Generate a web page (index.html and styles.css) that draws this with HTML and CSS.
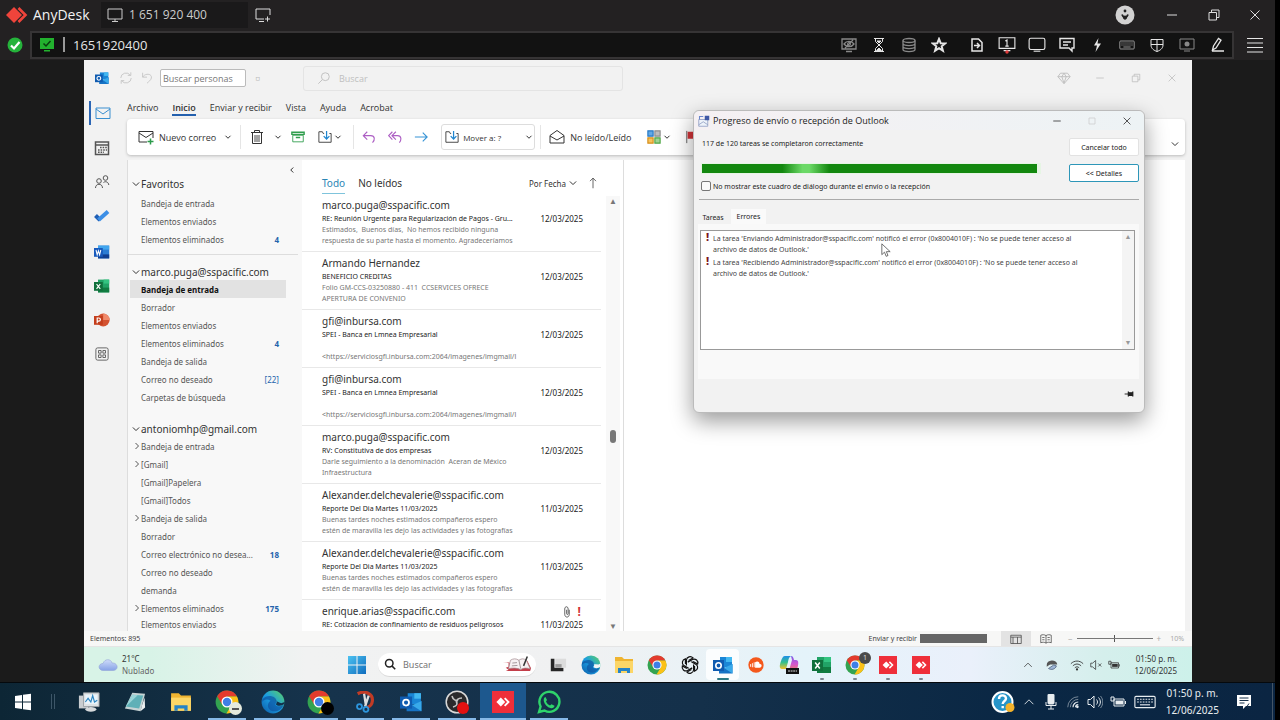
FILE: index.html
```html
<!DOCTYPE html>
<html lang="es">
<head>
<meta charset="utf-8">
<title>AnyDesk - 1 651 920 400</title>
<link rel="stylesheet" href="styles.css">
</head>
<body>
<svg class="sprite" aria-hidden="true">
  <defs>
    <linearGradient id="gEdge" x1="0" y1="1" x2="1" y2="0"><stop offset="0" stop-color="#0c59a4"/><stop offset=".5" stop-color="#1b9de2"/><stop offset="1" stop-color="#5fd35f"/></linearGradient>
    <linearGradient id="gCopA" x1="0" y1="0" x2="0" y2="1"><stop offset="0" stop-color="#1f8fe8"/><stop offset=".5" stop-color="#36c08c"/><stop offset="1" stop-color="#f3c22c"/></linearGradient>
    <linearGradient id="gCopB" x1="0" y1="0" x2="0" y2="1"><stop offset="0" stop-color="#7a5be8"/><stop offset=".5" stop-color="#d355cf"/><stop offset="1" stop-color="#f5824a"/></linearGradient>
    <linearGradient id="gWin" x1="0" y1="0" x2="1" y2="1"><stop offset="0" stop-color="#4cc2f1"/><stop offset="1" stop-color="#0f6cbd"/></linearGradient>
    <linearGradient id="gCloud" x1="0" y1="0" x2="0" y2="1"><stop offset="0" stop-color="#cfdcfa"/><stop offset="1" stop-color="#86a2e6"/></linearGradient>
  </defs>
  <symbol id="min" viewBox="0 0 16 16"><path d="M3 8h10"/></symbol>
  <symbol id="restore" viewBox="0 0 16 16"><path d="M3 5.500h7.500v7.500H3zM5.500 5.500V3H13v7.500h-2.500"/></symbol>
  <symbol id="max" viewBox="0 0 16 16"><path d="M4 4h8v8H4z"/></symbol>
  <symbol id="close" viewBox="0 0 16 16"><path d="M3.500 3.500l9 9M12.500 3.500l-9 9"/></symbol>
  <symbol id="down" viewBox="0 0 16 16"><path d="M3 5.500l5 5 5-5"/></symbol>
  <symbol id="right" viewBox="0 0 16 16"><path d="M5 2l6 6-6 6"/></symbol>
  <symbol id="left" viewBox="0 0 16 16"><path d="M10.500 3l-5 5 5 5"/></symbol>
  <symbol id="up" viewBox="0 0 16 16"><path d="M3 10.500l5-5 5 5"/></symbol>
  <symbol id="anydesk" viewBox="0 0 24 18"><path d="M9 1l8 8-8 8-8-8z" fill="#ef443b" stroke="none"/><path d="M13.500 2l7 7-7 7" fill="none" stroke="#ef443b" stroke-width="2.600"/></symbol>
  <symbol id="adtile" viewBox="0 0 20 20"><path d="M0 0h20v20H0z" fill="#ef2f3a" stroke="none"/><path d="M8 6l4 4-4 4-4-4z" fill="#fff" stroke="none"/><path d="M11.500 6.500L15 10l-3.500 3.500" fill="none" stroke="#fff" stroke-width="1.700"/></symbol>
  <symbol id="monitor" viewBox="0 0 16 16"><path d="M1 2h14v10H1zM5 14.500h6M8 12v2"/></symbol>
  <symbol id="monplus" viewBox="0 0 16 16"><path d="M9 12H1V2h14v6M4 14.500h5M12.500 9.500v5M10 12h5"/></symbol>
  <symbol id="eyeoff" viewBox="0 0 16 16"><path d="M1 2h14v10H1zM5 14.500h6M3 7c2.500-3.500 7.500-3.500 10 0-2.500 3.500-7.500 3.500-10 0zM4 11l8-8" stroke-width="1.300"/><circle cx="8" cy="7" r="1.500"/></symbol>
  <symbol id="hour" viewBox="0 0 16 16"><path d="M3 1.500h10M3 14.500h10M4.500 2v2.500L8 8l3.500-3.500V2M4.500 14v-2.500L8 8l3.500 3.500V14"/><path d="M6 4h4L8 6zM5.500 13.500L8 11l2.500 2.500z" fill="currentColor"/></symbol>
  <symbol id="db" viewBox="0 0 16 16"><g stroke-width="1.300"><ellipse cx="8" cy="3.500" rx="6" ry="2"/><path d="M2 3.500v9c0 2.700 12 2.700 12 0v-9M2 6.500c0 2.700 12 2.700 12 0M2 9.500c0 2.700 12 2.700 12 0"/></g></symbol>
  <symbol id="star" viewBox="0 0 16 16"><path d="M8 2l1.700 4.200 4.500.2-3.500 2.900 1.200 4.400L8 11.200l-3.900 2.500 1.200-4.400L1.800 6.400l4.500-.2z" stroke-width="2"/></symbol>
  <symbol id="filego" viewBox="0 0 16 16"><path d="M3 2h6.500L13 5.500V14H3zM5 8.500h5M8 6l2.500 2.500L8 11" stroke-width="1.500"/></symbol>
  <symbol id="mon1" viewBox="0 0 16 16"><path d="M1 1.500h14v9.500H1zM5 13h6M6.500 4.500L8 3.500V9M6.500 9h3"/><circle cx="8" cy="14.200" r="1.500" fill="#e23b3b" stroke="none"/></symbol>
  <symbol id="monitor2" viewBox="0 0 16 16"><rect x="1" y="2" width="14" height="10" rx="1.500"/><path d="M5 13.500h6"/></symbol>
  <symbol id="chat" viewBox="0 0 16 16"><path d="M1 1.500h14V11h-2v3l-3-3H1zM4 5h8M4 8h5" stroke-width="1.400"/></symbol>
  <symbol id="bolt" viewBox="0 0 16 16"><path d="M9.500 1L5 8.500h3L6.500 15 12 6.500H8.500z" fill="currentColor" stroke="none"/></symbol>
  <symbol id="kbd" viewBox="0 0 20 16"><rect x="1" y="3" width="18" height="10" rx="1"/><path d="M3 5.500h14M3 8h14" stroke-dasharray="1.500 1"/><path d="M5.500 10.500h9"/></symbol>
  <symbol id="shield" viewBox="0 0 16 16"><path d="M2 2.500h12V8c0 3.500-3 5.500-6 6.500C5 13.500 2 11.500 2 8zM8 2.500v12M2 7.500h12"/></symbol>
  <symbol id="rec" viewBox="0 0 16 16"><path d="M1 2h14v10H1zM5 14h6"/><circle cx="8" cy="7" r="2.500" fill="currentColor" stroke="none"/></symbol>
  <symbol id="pen" viewBox="0 0 16 16"><path d="M3.500 13l1-4L9.500 1.500l2.500 1.700L7 11zM3 14h12" stroke-width="1.300"/></symbol>
  <symbol id="burger" viewBox="0 0 16 16"><path d="M0 1.500h16M0 6h16M0 10.500h16M0 15h16"/></symbol>
  <symbol id="avatar" viewBox="0 0 20 20"><circle cx="10" cy="10" r="9.500" fill="#d2d2d2" stroke="none"/><circle cx="10" cy="6" r="1.400" fill="#222" stroke="none"/><path d="M7 9.500c.5 1.500 1.500 2.500 3 4 1.500-1.500 2.500-2.500 3-4" stroke="#222" stroke-width="1.800" fill="none"/><circle cx="10" cy="12.500" r="2" fill="#222" stroke="none"/></symbol>
  <symbol id="okdot" viewBox="0 0 16 16"><circle cx="8" cy="8" r="7.500" fill="#25b33b" stroke="none"/><path d="M4 8.500l3 3L12.500 5" stroke="#fff" stroke-width="2.200"/></symbol>
  <symbol id="okmon" viewBox="0 0 16 14"><path d="M1 0h14v11H1zM5 12h6v1.500H5z" fill="#22b12e" stroke="none"/><path d="M4.500 5.500l2.500 2.500L11.500 3" stroke="#093e0d" stroke-width="1.500"/></symbol>
  <symbol id="outlook" viewBox="0 0 20 20"><path d="M7 2h12v10H7z" fill="#1a86d6" stroke="none"/><path d="M13 2h6v5h-6z" fill="#42b8f1" stroke="none"/><path d="M6 9l7 4 6.500-4v9.500H6z" fill="#1673c5" stroke="none"/><path d="M19.500 9v9.500L11 13z" fill="#38a9ea" stroke="none"/><path d="M0 5h11v11H0z" fill="#0f5bb0" stroke="none"/><circle cx="5.500" cy="10.500" r="2.700" fill="none" stroke="#fff" stroke-width="1.600"/></symbol>
  <symbol id="word" viewBox="0 0 20 20"><path d="M5 2h14v16H5z" fill="#2b7cd3" stroke="none"/><path d="M5 2h14v5H5z" fill="#41a5ee" stroke="none"/><path d="M5 13h14v5H5z" fill="#103f91" stroke="none"/><path d="M0 5h11v11H0z" fill="#185abd" stroke="none"/><path d="M2.500 7.500L4 13.500l1.500-5 1.500 5 1.500-6" stroke="#fff" stroke-width="1.300"/></symbol>
  <symbol id="excel" viewBox="0 0 20 20"><path d="M5 2h14v16H5z" fill="#21a366" stroke="none"/><path d="M12 2h7v5h-7z" fill="#33c481" stroke="none"/><path d="M5 12h14v6H5z" fill="#107c41" stroke="none"/><path d="M0 5h11v11H0z" fill="#10703c" stroke="none"/><path d="M3.200 7.500l4.600 6M7.800 7.500l-4.600 6" stroke="#fff" stroke-width="1.500"/></symbol>
  <symbol id="ppt" viewBox="0 0 20 20"><circle cx="11.500" cy="10" r="8" fill="#d35230" stroke="none"/><path d="M11.500 2a8 8 0 0 1 8 8h-8z" fill="#f08a6b" stroke="none"/><path d="M0 5h11v11H0z" fill="#c43e1c" stroke="none"/><path d="M4 14V7.500h2a2 2 0 0 1 0 4H4" stroke="#fff" stroke-width="1.500"/></symbol>
  <symbol id="mail" viewBox="0 0 16 16"><path d="M1 3h14v10.500H1zM1 4l7 5 7-5"/></symbol>
  <symbol id="cal" viewBox="0 0 16 16"><path d="M1.500 2h13v12.500h-13zM1.500 5h13" stroke-width="1.500"/><path d="M6 7.500h7M4 10h9M4 12.300h6" stroke-width="1.400" stroke-dasharray="1.600 1"/></symbol>
  <symbol id="people" viewBox="0 0 16 16"><circle cx="5" cy="7" r="2.300"/><circle cx="11.500" cy="4" r="2.300"/><path d="M1.500 14c0-5 7-5 7 0M9.500 8.500c2-1.700 5-.5 5.300 2.500"/></symbol>
  <symbol id="todo" viewBox="0 0 16 16"><path d="M1.500 7.500l4.500 4.500" stroke="#1f5fb5" stroke-width="4"/><path d="M4.500 12L14 3.500" stroke="#3d8fe6" stroke-width="4"/></symbol>
  <symbol id="apps" viewBox="0 0 16 16"><rect x="1" y="1" width="14" height="14" rx="2"/><path d="M4 4h3v3H4zM9 4h3v3H9zM4 9h3v3H4zM9 9h3v3H9z"/></symbol>
  <symbol id="sync" viewBox="0 0 16 16"><path d="M2 8a6 6 0 0 1 11-3M14 8a6 6 0 0 1-11 3M13.500 1.500V5H10M2.500 14.500V11H6"/></symbol>
  <symbol id="undo" viewBox="0 0 16 16"><path d="M3 2v5h5M3 7c3-5 11-4 10 1-.5 2.500-3 4-5 6"/></symbol>
  <symbol id="search" viewBox="0 0 16 16"><circle cx="9.500" cy="6.500" r="4.500"/><path d="M6 10l-4.500 4.500"/></symbol>
  <symbol id="searchr" viewBox="0 0 16 16"><circle cx="7" cy="7" r="5"/><path d="M10.500 10.500l4.500 4.500"/></symbol>
  <symbol id="gem" viewBox="0 0 16 16"><path d="M4 2.500h8L15 6.500 8 14.500 1 6.500zM1 6.500h14M5.500 6.500L8 14l2.500-7.500L8 2.500z"/></symbol>
  <symbol id="newmail" viewBox="0 0 16 16"><path d="M9 13H1V2.500h14V9M1 4l7 4.500L15 4"/><path d="M12.500 9.500v6M9.500 12.500h6" stroke="#2c9b4b" stroke-width="1.500"/></symbol>
  <symbol id="trash" viewBox="0 0 16 16"><path d="M2 3.500h12M5.500 3.500v-2h5v2M3.500 3.500v11h9v-11"/><path d="M6 6v7M8 6v7M10 6v7" stroke-width=".9"/></symbol>
  <symbol id="archive" viewBox="0 0 16 16"><path d="M2 6h12v7.500H2z"/><path d="M1 2.500h14V5H1zM5.500 8.500h5" stroke-width="1.600"/></symbol>
  <symbol id="moveto" viewBox="0 0 16 16"><path d="M7 4H6L5 2H1v12h14V4h-2"/><path d="M9.800 1v9M6.500 7l3.300 3.300L13 7" stroke="#2186cf" stroke-width="1.400"/></symbol>
  <symbol id="reply" viewBox="0 0 16 16"><path d="M6 2L1.500 6.500 6 11M1.500 6.500H10c5 0 5 5 2 8" stroke-width="1.300"/></symbol>
  <symbol id="replyall" viewBox="0 0 16 16"><path d="M9 2L4.500 6.500 9 11M5 2L.8 6.500 5 11M4.500 6.500H11c4.500 0 4.500 5 2 8" stroke-width="1.300"/></symbol>
  <symbol id="forward" viewBox="0 0 16 16"><path d="M1 8h14M10 3l5 5-5 5" stroke-width="1.300"/></symbol>
  <symbol id="open" viewBox="0 0 16 16"><path d="M1 6.500L8 1.500l7 5V14H1zM1 7l7 4 7-4"/></symbol>
  <symbol id="cats" viewBox="0 0 16 16"><g stroke-width="1.300"><path d="M1 1h6v6H1z" fill="#62a9e6" stroke="#2577c4"/><path d="M9 1h6v6H9z" fill="#bdbdbd" stroke="#8b8b8b"/><path d="M1 9h6v6H1z" fill="#f6c35c" stroke="#d58d17"/><path d="M9 9h6v6H9z" fill="#9fd394" stroke="#4ea543"/></g></symbol>
  <symbol id="flag" viewBox="0 0 16 16"><path d="M2 1v14" stroke="#555"/><path d="M3 2h12v8H3z" fill="#d13438" stroke="none"/></symbol>
  <symbol id="clip" viewBox="0 0 16 16"><path d="M11 5v6c0 5-6 5-6 0V4c0-4 4.500-4 4.500 0v6c0 1.800-2 1.800-2 0V5"/></symbol>
  <symbol id="arrup" viewBox="0 0 16 16"><path d="M8 15V1.500M4 5.500l4-4 4 4"/></symbol>
  <symbol id="dlgicon" viewBox="0 0 16 16"><path d="M1 6h12v9H1z" fill="#eef2fa" stroke="#8896bd"/><path d="M1 13l6-4 6 4" stroke="#8896bd"/><path d="M9 1h6v6H9z" fill="#3f58a5" stroke="none"/><path d="M2 6V2h5" stroke="#6a86cc" stroke-width="1.400"/></symbol>
  <symbol id="pin" viewBox="0 0 16 16"><path d="M1 8h6" stroke-width="1.500"/><path d="M7 4v8M7 6h7v4H7zM14 4v8" fill="currentColor" stroke-width="2"/></symbol>
  <symbol id="cursor" viewBox="0 0 12 18"><path d="M1 1v13l3.200-3 2 5 2.200-1-2-4.600H11z" fill="#fff" stroke="#555"/></symbol>
  <symbol id="layout" viewBox="0 0 16 16"><path d="M1 3h14v11H1zM1 5.500h14M10 5.500V14M4 5.500V14"/></symbol>
  <symbol id="book" viewBox="0 0 16 16"><path d="M8 3.500C6 2 3 2 1 3v10c2-1 5-1 7 .5 2-1.500 5-1.500 7-.5V3c-2-1-5-1-7 .5zM8 3.500v10M3 6h3M3 9h3M10 6h3M10 9h3"/></symbol>
  <symbol id="cloud" viewBox="0 0 20 16"><path d="M5 13.500C-.5 13 0 6.500 5 6.500 6.500 1.500 13 1.500 14 6c6-.5 7 7 1.500 7.500z" fill="url(#gCloud)" stroke="#93a5d8" stroke-width=".6"/></symbol>
  <symbol id="win11" viewBox="0 0 20 20"><path d="M1 1h8.500v8.500H1zM10.500 1H19v8.500h-8.500zM1 10.500h8.500V19H1zM10.500 10.500H19V19h-8.500z" fill="url(#gWin)" stroke="none"/></symbol>
  <symbol id="win10" viewBox="0 0 20 20"><path d="M2 4l7-1v6.500H2zM10 2.800L18 1.700v7.800h-8zM2 10.500h7V17l-7-1zM10 10.500h8v7.800l-8-1.100z" fill="#fff" stroke="none"/></symbol>
  <symbol id="openbook" viewBox="0 0 32 18"><path d="M1 8l6-1v5l-3 1 3 2-3 1.500h26l1-3-4-8-3 1z" fill="#c33d49" stroke="none"/><path d="M9 5c3-2 6-2 9 0 3-2 5-2 8 0l4 9c-4-1-7-1-10 1-4-2-9-2-13-1z" fill="#f6f1f2" stroke="#a58e93" stroke-width=".8"/><path d="M18 5l2 9M11 8l5-.5M10.500 11l6-.5" stroke="#8a7c80" stroke-width=".8"/><path d="M27 1l-4 10" stroke="#333" stroke-width="1.600"/></symbol>
  <symbol id="task" viewBox="0 0 20 20"><path d="M2 3h4v10h10v4H2z" fill="#262626" stroke="none"/><path d="M7 3h12v10H7z" fill="#dcdcdc" stroke="none"/><path d="M7 9h7v4H7z" fill="#9b9b9b" stroke="none"/></symbol>
  <symbol id="edge" viewBox="0 0 20 20"><circle cx="10" cy="10" r="9.500" fill="url(#gEdge)" stroke="none"/><path d="M1 8C5 3 13 5 13 9.500c0 1-1 1.500-1 2.500 0 2 5 2 7 0-2 5-7 7-11 5C5 15 5 11 8 9 5 7 2 8 1 10z" fill="#0d4f9c" opacity=".65" stroke="none"/><path d="M12 9c2 0 1 2 .5 3 1 1.700 5 1.500 7-.5 0-1 .2-2 0-3l-2 1z" fill="#f3f5f6" stroke="none"/></symbol>
  <symbol id="edgedark" viewBox="0 0 20 20"><circle cx="10" cy="10" r="9.500" fill="url(#gEdge)" stroke="none"/><path d="M1 8C5 3 13 5 13 9.500c0 1-1 1.500-1 2.500 0 2 5 2 7 0-2 5-7 7-11 5C5 15 5 11 8 9 5 7 2 8 1 10z" fill="#0d4f9c" opacity=".65" stroke="none"/><path d="M12 9c2 0 1 2 .5 3 1 1.700 5 1.500 7-.5 0-.5 .3-1 .3-1.500l-3 1z" fill="#13304a" stroke="none"/></symbol>
  <symbol id="folder" viewBox="0 0 20 20"><path d="M1 2h7l2 2h9v14H1z" fill="#efb431" stroke="none"/><path d="M1 6h18v12H1z" fill="#fcd667" stroke="none"/><path d="M4 18v-5h12v5h-3v-2H7v2z" fill="#2683c6" stroke="none"/></symbol>
  <symbol id="chrome" viewBox="0 0 20 20"><circle cx="10" cy="10" r="9.500" fill="#33a350" stroke="none"/><path d="M1.800 5.200A9.500 9.500 0 0 1 18.400 5.500H10L6 12z" fill="#e33b2e" stroke="none"/><path d="M18.300 5.500A9.500 9.500 0 0 1 9.500 19.500L14 12l-3-6.500z" fill="#fbc116" stroke="none"/><circle cx="10" cy="10" r="4.600" fill="#fff" stroke="none"/><circle cx="10" cy="10" r="3.500" fill="#3f7fe6" stroke="none"/></symbol>
  <symbol id="gpt" viewBox="0 0 20 20"><g stroke="#111" stroke-width="1.200">
    <path d="M6.400 10.500V5A3.800 3.800 0 0 1 13 2.900L8.600 5.600"/>
    <path d="M6.400 10.500V5A3.800 3.800 0 0 1 13 2.900L8.600 5.600" transform="rotate(60 10 10)"/>
    <path d="M6.400 10.500V5A3.800 3.800 0 0 1 13 2.900L8.600 5.600" transform="rotate(120 10 10)"/>
    <path d="M6.400 10.500V5A3.800 3.800 0 0 1 13 2.900L8.600 5.600" transform="rotate(180 10 10)"/>
    <path d="M6.400 10.500V5A3.800 3.800 0 0 1 13 2.900L8.600 5.600" transform="rotate(240 10 10)"/>
    <path d="M6.400 10.500V5A3.800 3.800 0 0 1 13 2.900L8.600 5.600" transform="rotate(300 10 10)"/></g></symbol>
  <symbol id="sound" viewBox="0 0 20 20"><circle cx="10" cy="10" r="8.500" fill="#f4581c" stroke="none"/><path d="M4 12V9M6 12.500V8M8 12.500V7" stroke="#fff"/><path d="M9 13V7c3-2 5 0 5 2 3-.5 3 4 0 4z" fill="#fff" stroke="none"/></symbol>
  <symbol id="copilot" viewBox="0 0 20 20"><path d="M6 1h6c-2 1-2.500 3-3 6l-2 7H3c-3 0-2.500-4-1-8 1-3 2-5 4-5z" fill="url(#gCopA)" stroke="none"/><path d="M12 1c2 0 2.500 2 3 4h2c3 0 2.500 4 1.500 8-1 3-2 4-4 4H8c2-1 2.500-3 3-5l2-7z" fill="url(#gCopB)" stroke="none"/><path d="M7 13h13v6H7z" fill="#111" stroke="none"/><path d="M9 16h9" stroke="#ddd" stroke-dasharray="2 .6"/></symbol>
  <symbol id="whats" viewBox="0 0 24 24"><path d="M2 22l1.600-5.500A10 10 0 1 1 7.500 20.500z" stroke="#2fd46b" stroke-width="2.400" fill="none"/><path d="M8.500 7l1.500 3-1 1.500c1 2 2 3 4 4l1.500-1.200 3 1.500c0 2-2 2.700-3.500 2.400-4-1-6.500-4-7.200-7C6.500 9 7 7.500 8.500 7z" fill="#2fd46b" stroke="none"/></symbol>
  <symbol id="obs" viewBox="0 0 24 24"><circle cx="12" cy="12" r="10.800" fill="#2a2a2c" stroke="#d9d9d9" stroke-width="1.500"/><path d="M7 6c1 4 4 5 6 4M17 8c-4 0-6 2-5 5M8 17c4-1 5-3 3-6" stroke="#c4c4c4" stroke-width="1.600"/><circle cx="18" cy="18" r="6" fill="#e31111" stroke="none"/></symbol>
  <symbol id="snip" viewBox="0 0 24 24"><path d="M4 3c8-4 17 0 16 8-.5 5-3 6-6 7" stroke="#c23b25" stroke-width="3.500"/><path d="M11 3l2 13M16 5l-4 12" stroke="#dedede" stroke-width="2.500"/><circle cx="6" cy="17" r="2.700" stroke="#2d95dd" stroke-width="2"/><circle cx="13" cy="20" r="2.700" stroke="#2d95dd" stroke-width="2"/></symbol>
  <symbol id="perf" viewBox="0 0 24 24"><path d="M1 5h10v14H1z" fill="#c9cdd0" stroke="none"/><path d="M6 2h17v15H6z" fill="#dfe3e5" stroke="#9aa0a4"/><path d="M8 4h13v10H8z" fill="#eaf5fc" stroke="none"/><path d="M8 12l3-4 3 4 2-7 2 7 3-2" stroke="#2e86c1" stroke-width="1.300"/><ellipse cx="14" cy="20" rx="6" ry="2.500" fill="#d6d9db" stroke="none"/></symbol>
  <symbol id="note" viewBox="0 0 24 24"><path d="M9 2l14 1-5 19L1 19z" fill="#c6d3d4" stroke="none"/><path d="M9 4l12 1-4.500 14L2 17z" fill="#5fb0b7" stroke="none"/><path d="M9 4l6 .5L2 17z" fill="#9ad5d8" stroke="none"/><path d="M18 22l1.500-6 3-9 .5 11z" fill="#eceff0" stroke="none"/></symbol>
  <symbol id="help" viewBox="0 0 24 24"><circle cx="11.500" cy="12" r="10" fill="#2795c9" stroke="#fff" stroke-width="2"/><path d="M8 9c0-5 7-4.500 7-.5 0 2.500-3.300 2.500-3.300 5.500M11.700 16v2.200" stroke="#fff" stroke-width="2.400"/><circle cx="19" cy="17.500" r="4.500" fill="#f5b32b" stroke="none"/></symbol>
  <symbol id="mic" viewBox="0 0 16 16"><rect x="5" y="0" width="6" height="10" rx="1" fill="currentColor"/><path d="M3 8v3.500h10V8M8 11.500V15M5 15h6"/></symbol>
  <symbol id="signal" viewBox="0 0 16 16"><path d="M2 14A12 12 0 0 1 14 2M5 14a9 9 0 0 1 9-9" opacity=".55"/><path d="M8 14a6 6 0 0 1 6-6M11 14a3 3 0 0 1 3-3" stroke-width="1.400"/><circle cx="13" cy="13.500" r="1.500" fill="currentColor" stroke="none"/></symbol>
  <symbol id="wifi" viewBox="0 0 16 16"><path d="M1 6.500c4-4 10-4 14 0M3.300 9c3-2.800 6.400-2.800 9.400 0M5.500 11.200c1.700-1.500 3.300-1.500 5 0"/><circle cx="8" cy="13" r="1.300" fill="currentColor" stroke="none"/></symbol>
  <symbol id="vol" viewBox="0 0 16 16"><path d="M1 5.500h2.500L7 2v12l-3.500-3.500H1zM9.500 5.500c1.300 1.500 1.300 3.500 0 5M11.500 3.500c2.500 2.700 2.500 6.300 0 9"/><path d="M13.500 2c3 3.500 3 8.500 0 12" opacity=".5"/></symbol>
  <symbol id="mute" viewBox="0 0 16 16"><path d="M1 5.500h2.500L7.500 2v12l-4-3.500H1zM11 6l4 4M15 6l-4 4"/></symbol>
  <symbol id="batt" viewBox="0 0 16 16"><path d="M4 5h10v7H4zM15.500 7v3M1 3h3v4H1z"/><path d="M5.500 6.500H13v4H5.500z" fill="currentColor" stroke="none"/></symbol>
  <symbol id="notif" viewBox="0 0 16 16"><path d="M1 1h14v11h-5l-3 3v-3H1z" fill="#fff" stroke="none"/><path d="M3.500 4h9M3.500 6.500h9M3.500 9h5" stroke="#17314a"/><path d="M13 9.500l-2 3 3 2" stroke="#17314a"/></symbol>
  <symbol id="steam" viewBox="0 0 16 16"><path d="M2 8a6 5 0 0 1 12-.5H6C4 8 4 9 2 10z" fill="#555" stroke="none"/><path d="M4 12c3 2 8 1 9-3L10 8z" fill="#9fb7d8" stroke="#596b86"/></symbol>
</svg>

<header class="ad-title">
  <div class="brand"><svg class="logo"><use href="#anydesk"/></svg><span>AnyDesk</span></div>
  <button class="session"><svg class="i16"><use href="#monitor"/></svg><span>1 651 920 400</span></button>
  <button class="newtab" aria-label="Nueva sesión"><svg class="i16"><use href="#monplus"/></svg></button>
  <div class="ad-win">
    <button class="av" aria-label="Cuenta"><svg class="i20"><use href="#avatar"/></svg></button>
    <button aria-label="Minimizar"><svg class="i16"><use href="#min"/></svg></button>
    <button aria-label="Restaurar"><svg class="i16"><use href="#restore"/></svg></button>
    <button class="x" aria-label="Cerrar"><svg class="i16"><use href="#close"/></svg></button>
  </div>
</header>

<div class="ad-bar">
  <svg class="i16 status-ok"><use href="#okdot"/></svg>
  <div class="address">
    <svg class="i16"><use href="#okmon"/></svg><span class="bar"></span>
    <input aria-label="Dirección" value="1651920400">
    <div class="tools">
      <button class="dim" aria-label="Privacidad"><svg class="i16"><use href="#eyeoff"/></svg></button>
      <button aria-label="Espera"><svg class="i16"><use href="#hour"/></svg></button>
      <button class="dim" aria-label="Datos"><svg class="i16"><use href="#db"/></svg></button>
      <button aria-label="Favorito"><svg class="i16"><use href="#star"/></svg></button>
    </div>
    <div class="tools">
      <button aria-label="Archivos"><svg class="i16"><use href="#filego"/></svg></button>
      <button aria-label="Monitor 1"><svg class="i18"><use href="#mon1"/></svg></button>
      <button aria-label="Pantalla"><svg class="i18"><use href="#monitor2"/></svg></button>
      <button aria-label="Chat"><svg class="i16"><use href="#chat"/></svg></button>
      <button aria-label="Acciones"><svg class="i16"><use href="#bolt"/></svg></button>
      <button class="mid" aria-label="Teclado"><svg class="i16"><use href="#kbd"/></svg></button>
      <button aria-label="Permisos"><svg class="i16"><use href="#shield"/></svg></button>
      <button class="dim" aria-label="Grabar"><svg class="i16"><use href="#rec"/></svg></button>
      <button aria-label="Pizarra"><svg class="i16"><use href="#pen"/></svg></button>
    </div>
  </div>
  <button class="burger" aria-label="Menú"><svg class="i16"><use href="#burger"/></svg></button>
</div>

<main class="remote">
  <div class="ol-title">
    <svg class="i14"><use href="#outlook"/></svg>
    <svg class="i14 faint"><use href="#sync"/></svg>
    <svg class="i14 faint"><use href="#undo"/></svg>
    <input class="people" aria-label="Buscar personas" placeholder="Buscar personas">
    <span class="qat">▫</span>
    <label class="ol-search"><svg class="i14"><use href="#search"/></svg><input aria-label="Buscar" placeholder="Buscar"></label>
    <div class="ol-win">
      <button aria-label="Premium"><svg class="i14"><use href="#gem"/></svg></button>
      <button aria-label="Minimizar"><svg class="i12"><use href="#min"/></svg></button>
      <button aria-label="Restaurar"><svg class="i12"><use href="#restore"/></svg></button>
      <button aria-label="Cerrar"><svg class="i12"><use href="#close"/></svg></button>
    </div>
  </div>

  <div class="ol-body">
    <nav class="rail">
      <button class="on" aria-label="Correo"><svg class="i16"><use href="#mail"/></svg></button>
      <button aria-label="Calendario"><svg class="i16"><use href="#cal"/></svg></button>
      <button aria-label="Contactos"><svg class="i16"><use href="#people"/></svg></button>
      <button aria-label="Tareas"><svg class="i16"><use href="#todo"/></svg></button>
      <button class="office" aria-label="Word"><svg class="i16"><use href="#word"/></svg></button>
      <button aria-label="Excel"><svg class="i16"><use href="#excel"/></svg></button>
      <button aria-label="PowerPoint"><svg class="i16"><use href="#ppt"/></svg></button>
      <button aria-label="Aplicaciones"><svg class="i14"><use href="#apps"/></svg></button>
    </nav>
    <div class="work">
      <div class="tabs">
        <button>Archivo</button><button class="on">Inicio</button><button>Enviar y recibir</button><button>Vista</button><button>Ayuda</button><button>Acrobat</button>
      </div>
      <div class="ribbon">
        <button class="new"><svg class="i16"><use href="#newmail"/></svg>Nuevo correo<svg class="i8"><use href="#down"/></svg></button>
        <i class="sep"></i>
        <button aria-label="Eliminar"><svg class="i16"><use href="#trash"/></svg><svg class="i8 wide"><use href="#down"/></svg></button>
        <button class="green" aria-label="Archivar"><svg class="i14"><use href="#archive"/></svg></button>
        <button class="tight" aria-label="Mover"><svg class="i14"><use href="#moveto"/></svg><svg class="i8"><use href="#down"/></svg></button>
        <i class="sep"></i>
        <button class="purple" aria-label="Responder"><svg class="i14"><use href="#reply"/></svg></button>
        <button class="purple" aria-label="Responder a todos"><svg class="i14"><use href="#replyall"/></svg></button>
        <button class="blue" aria-label="Reenviar"><svg class="i14"><use href="#forward"/></svg></button>
        <button class="move"><svg class="i14"><use href="#moveto"/></svg><span>Mover a: ?</span><svg class="i8"><use href="#down"/></svg></button>
        <i class="sep"></i>
        <button class="read"><svg class="i16"><use href="#open"/></svg>No leído/Leído</button>
        <button class="tight" aria-label="Categorías"><svg class="i14"><use href="#cats"/></svg><svg class="i8"><use href="#down"/></svg></button>
        <button class="flag" aria-label="Seguimiento"><svg class="i14"><use href="#flag"/></svg></button>
        <button class="more" aria-label="Más"><svg class="i10"><use href="#down"/></svg></button>
      </div>
      <div class="panes">
        <aside class="folders">
          <button class="collapse" aria-label="Contraer"><svg class="i8"><use href="#left"/></svg></button>
          <h2><svg class="i10"><use href="#down"/></svg>Favoritos</h2>
          <ul>
            <li><a href="#">Bandeja de entrada</a></li>
            <li><a href="#">Elementos enviados</a></li>
            <li><a href="#">Elementos eliminados</a><b>4</b></li>
          </ul>
          <h2 class="first"><svg class="i10"><use href="#down"/></svg>marco.puga@sspacific.com</h2>
          <ul>
            <li class="sel"><a href="#">Bandeja de entrada</a></li>
            <li><a href="#">Borrador</a></li>
            <li><a href="#">Elementos enviados</a></li>
            <li><a href="#">Elementos eliminados</a><b>4</b></li>
            <li><a href="#">Bandeja de salida</a></li>
            <li><a href="#">Correo no deseado</a><b class="thin">[22]</b></li>
            <li><a href="#">Carpetas de búsqueda</a></li>
          </ul>
          <h2 class="second"><svg class="i10"><use href="#down"/></svg>antoniomhp@gmail.com</h2>
          <ul>
            <li class="sub"><svg class="i8"><use href="#right"/></svg><a href="#">Bandeja de entrada</a></li>
            <li class="sub"><svg class="i8"><use href="#right"/></svg><a href="#">[Gmail]</a></li>
            <li><a href="#">[Gmail]Papelera</a></li>
            <li><a href="#">[Gmail]Todos</a></li>
            <li class="sub"><svg class="i8"><use href="#right"/></svg><a href="#">Bandeja de salida</a></li>
            <li><a href="#">Borrador</a></li>
            <li><a href="#">Correo electrónico no desea...</a><b>18</b></li>
            <li><a href="#">Correo no deseado</a></li>
            <li><a href="#">demanda</a></li>
            <li class="sub"><svg class="i8"><use href="#right"/></svg><a href="#">Elementos eliminados</a><b>175</b></li>
            <li class="last"><a href="#">Elementos enviados</a></li>
          </ul>
        </aside>
        <section class="list">
          <div class="list-head">
            <button class="on">Todo</button><button>No leídos</button>
            <button class="sort">Por Fecha <svg class="i10"><use href="#down"/></svg></button>
            <button aria-label="Orden"><svg class="i12"><use href="#arrup"/></svg></button>
          </div>
          <div class="list-main">
            <div class="msgs">
              <article><h3>marco.puga@sspacific.com</h3><div class="subj"><span>RE: Reunión Urgente para Regularización de Pagos - Gru...</span><time>12/03/2025</time></div><p>Estimados,&nbsp; Buenos días,&nbsp; No hemos recibido ninguna<br>respuesta de su parte hasta el momento. Agradeceríamos</p></article>
              <article><h3>Armando Hernandez</h3><div class="subj"><span>BENEFICIO CREDITAS</span><time>12/03/2025</time></div><p>Folio GM-CCS-03250880 - 411&nbsp; CCSERVICES OFRECE<br>APERTURA DE CONVENIO</p></article>
              <article><h3>gfi@inbursa.com</h3><div class="subj"><span>SPEI - Banca en Lmnea Empresarial</span><time>12/03/2025</time></div><p><br>&lt;https://serviciosgfi.inbursa.com:2064/imagenes/imgmail/l</p></article>
              <article><h3>gfi@inbursa.com</h3><div class="subj"><span>SPEI - Banca en Lmnea Empresarial</span><time>12/03/2025</time></div><p><br>&lt;https://serviciosgfi.inbursa.com:2064/imagenes/imgmail/l</p></article>
              <article><h3>marco.puga@sspacific.com</h3><div class="subj"><span>RV: Constitutiva de dos empresas</span><time>12/03/2025</time></div><p>Darle seguimiento a la denominación&nbsp; Aceran de México<br>Infraestructura</p></article>
              <article><h3>Alexander.delchevalerie@sspacific.com</h3><div class="subj"><span>Reporte Del Dia Martes 11/03/2025</span><time>11/03/2025</time></div><p>Buenas tardes noches estimados compañeros espero<br>estén de maravilla les dejo las actividades y las fotografías</p></article>
              <article><h3>Alexander.delchevalerie@sspacific.com</h3><div class="subj"><span>Reporte Del Dia Martes 11/03/2025</span><time>11/03/2025</time></div><p>Buenas tardes noches estimados compañeros espero<br>estén de maravilla les dejo las actividades y las fotografías</p></article>
              <article><h3>enrique.arias@sspacific.com<span class="marks"><svg class="i12"><use href="#clip"/></svg><b>!</b></span></h3><div class="subj"><span>RE: Cotización de confinamiento de residuos peligrosos</span><time>11/03/2025</time></div><p></p></article>
            </div>
            <div class="scroll"><span>▲</span><i></i><span>▼</span></div>
          </div>
        </section>
        <section class="reading"></section>
      </div>
    </div>
  </div>

  <footer class="ol-status">
    <span>Elementos: 895</span>
    <span class="sendrec">Enviar y recibir<i></i></span>
    <button class="on" aria-label="Normal"><svg class="i12"><use href="#layout"/></svg></button>
    <button aria-label="Lectura"><svg class="i12"><use href="#book"/></svg></button>
    <span class="zoom">−<i></i>+<em>10%</em></span>
  </footer>

  <div class="tb11">
    <div class="weather"><svg><use href="#cloud"/></svg><p>21°C<br><span>Nublado</span></p></div>
    <div class="apps11">
      <button aria-label="Inicio"><svg class="i20"><use href="#win11"/></svg></button>
      <label class="search11"><svg class="i12"><use href="#searchr"/></svg><input aria-label="Buscar en Windows" placeholder="Buscar"><svg class="bk"><use href="#openbook"/></svg></label>
      <button aria-label="Vista de tareas"><svg class="i18"><use href="#task"/></svg></button>
      <button aria-label="Edge"><svg class="i20"><use href="#edge"/></svg></button>
      <button aria-label="Explorador"><svg class="i20"><use href="#folder"/></svg></button>
      <button aria-label="Chrome"><svg class="i20"><use href="#chrome"/></svg></button>
      <button aria-label="ChatGPT"><svg class="i20"><use href="#gpt"/></svg></button>
      <button class="on" aria-label="Outlook"><svg class="i20"><use href="#outlook"/></svg></button>
      <button aria-label="SoundCloud"><svg class="i18"><use href="#sound"/></svg></button>
      <button aria-label="Copilot"><svg class="i20"><use href="#copilot"/></svg></button>
      <button class="run" aria-label="Excel"><svg class="i20"><use href="#excel"/></svg></button>
      <button class="run" aria-label="Chrome perfil"><svg class="i20"><use href="#chrome"/></svg><span class="badge">1</span></button>
      <button class="run" aria-label="AnyDesk"><svg class="i18"><use href="#adtile"/></svg></button>
      <button class="run" aria-label="AnyDesk sesión"><svg class="i18"><use href="#adtile"/></svg></button>
    </div>
    <div class="tray11">
      <svg class="i12"><use href="#up"/></svg><svg class="i14"><use href="#steam"/></svg><svg class="i14"><use href="#wifi"/></svg><svg class="i12"><use href="#mute"/></svg><svg class="i12"><use href="#batt"/></svg>
      <time>01:50 p. m.<br>12/06/2025</time>
    </div>
  </div>

  <div class="dialog" role="dialog" aria-labelledby="dt">
    <div class="d-title">
      <svg class="i12"><use href="#dlgicon"/></svg><span id="dt">Progreso de envío o recepción de Outlook</span>
      <button aria-label="Minimizar"><svg class="i12"><use href="#min"/></svg></button>
      <button class="off" aria-label="Maximizar" disabled><svg class="i12"><use href="#max"/></svg></button>
      <button aria-label="Cerrar"><svg class="i12"><use href="#close"/></svg></button>
    </div>
    <div class="d-top">
      <div class="d-prog">
        <p>117 de 120 tareas se completaron correctamente</p>
        <div class="progress" role="progressbar" aria-valuenow="117" aria-valuemax="120"><i></i></div>
        <label><input type="checkbox">No mostrar este cuadro de diálogo durante el envío o la recepción</label>
      </div>
      <div class="d-btns"><button>Cancelar todo</button><button class="def">&lt;&lt; Detalles</button></div>
    </div>
    <div class="d-tabs"><button>Tareas</button><button class="on">Errores</button></div>
    <div class="d-panel">
      <div class="errors">
        <ul>
          <li>La tarea 'Enviando Administrador@sspacific.com' notificó el error (0x8004010F) : 'No se puede tener acceso al archivo de datos de Outlook.'</li>
          <li>La tarea 'Recibiendo Administrador@sspacific.com' notificó el error (0x8004010F) : 'No se puede tener acceso al archivo de datos de Outlook.'</li>
        </ul>
        <div class="d-scroll"><span>▲</span><span>▼</span></div>
      </div>
    </div>
    <div class="d-foot"><svg class="i10"><use href="#pin"/></svg></div>
    <svg class="cursor"><use href="#cursor"/></svg>
  </div>
</main>

<footer class="tb10">
  <button class="start" aria-label="Inicio"><svg class="i20"><use href="#win10"/></svg></button>
  <i class="grip"></i>
  <button aria-label="Monitor"><svg class="i22"><use href="#perf"/></svg></button>
  <button aria-label="Notas"><svg class="i22"><use href="#note"/></svg></button>
  <button aria-label="Explorador"><svg class="i22"><use href="#folder"/></svg></button>
  <button class="run" aria-label="Chrome"><svg class="i24"><use href="#chrome"/></svg><span class="dot white"></span></button>
  <button class="run" aria-label="Edge"><svg class="i24"><use href="#edgedark"/></svg></button>
  <button class="run" aria-label="Chrome 2"><svg class="i24"><use href="#chrome"/></svg><span class="dot"></span></button>
  <button class="run" aria-label="Recortes"><svg class="i22"><use href="#snip"/></svg></button>
  <button class="run" aria-label="Outlook"><svg class="i22"><use href="#outlook"/></svg></button>
  <button class="run" aria-label="OBS"><svg class="i24"><use href="#obs"/></svg></button>
  <button class="run active" aria-label="AnyDesk"><svg class="i22"><use href="#adtile"/></svg></button>
  <button class="run" aria-label="WhatsApp"><svg class="i24"><use href="#whats"/></svg></button>
  <div class="tray10">
    <svg class="i24"><use href="#help"/></svg><svg class="i14"><use href="#up"/></svg><svg class="i16"><use href="#mic"/></svg><svg class="i14"><use href="#signal"/></svg><svg class="i16"><use href="#vol"/></svg><svg class="i16"><use href="#batt"/></svg><svg class="k"><use href="#kbd"/></svg>
    <time>01:50 p. m.<br>12/06/2025</time>
    <svg class="i16 nt"><use href="#notif"/></svg>
    <i class="peek"></i>
  </div>
</footer>
</body>
</html>
```
FILE: styles.css
```css
* { box-sizing: border-box; }
body {
  margin: 0; height: 100vh; padding-right: 5px; overflow: hidden;
  display: flex; flex-direction: column;
  background: #000; color: #333;
  font-family: "Noto Sans", "Open Sans", sans-serif; font-size: 8px;
}
button, input { font: inherit; color: inherit; background: none; border: 0; padding: 0; margin: 0; min-width: 0; }
button { display: flex; align-items: center; justify-content: center; white-space: nowrap; }
p, h2, h3, ul { margin: 0; padding: 0; font-weight: 400; }
ul { list-style: none; }
a { color: inherit; text-decoration: none; }
svg { fill: none; stroke: currentColor; flex: none; display: block; }
.sprite { position: absolute; width: 0; height: 0; }
.i8 { width: 8px; height: 8px; stroke-width: 2; }
.i10 { width: 10px; height: 10px; stroke-width: 1.6; }
.i12 { width: 12px; height: 12px; }
.i14 { width: 14px; height: 14px; }
.i16 { width: 16px; height: 16px; }
.i18 { width: 18px; height: 18px; }
.i20 { width: 20px; height: 20px; }
.i22 { width: 22px; height: 22px; }
.i24 { width: 24px; height: 24px; }

/* AnyDesk frame */
.ad-title, .ad-bar, .ol-title, .tabs, .ribbon, .d-title { font-family: "Open Sans", "Noto Sans", sans-serif; }
.ad-title { flex: 0 0 29px; display: flex; align-items: center; background: #232122; color: #ddd; }
.brand { display: flex; align-items: center; gap: 4px; width: 101px; padding-left: 5px; font-size: 14px; font-weight: 500; color: #f2f2f2; }
.logo { width: 24px; height: 18px; }
.session { width: 147px; height: 26px; justify-content: flex-start; gap: 6px; padding-left: 6px; background: #1a191a; font-size: 12px; color: #ccc; }
.newtab { width: 30px; }
.ad-win { margin-left: auto; display: flex; }
.ad-win button { width: 42px; }
.ad-win .av { width: 52px; }
.ad-win .x { width: 40px; }
.ad-bar { flex: 0 0 31px; display: flex; align-items: center; background: #232122; color: #e6e6e6; }
.status-ok { margin: 0 7px; }
.address { flex: 1; height: 28px; display: flex; align-items: center; background: #121212; border: 2px solid #363435; padding-left: 7px; }
.address .bar { width: 2px; height: 15px; margin: 0 8px; background: #999; }
.address input { flex: 1; font-size: 13px; height: 22px; }
.tools { display: flex; }
.tools + .tools { margin-left: 8px; }
.tools button { width: 30px; height: 24px; }
.tools .dim { color: #888; }
.tools .mid { color: #b5b5b5; }
.burger { width: 41px; }

/* Remote desktop */
.remote { flex: 1; min-height: 0; position: relative; display: flex; flex-direction: column; margin: 0 83px 0 84px; background: #f2f2f2; box-shadow: 0 0 0 84px #1b1b1b; clip-path: inset(0 -83px 0 -84px); }
.ol-title { flex: 0 0 36px; display: flex; align-items: center; gap: 10px; padding: 0 2px 0 11px; color: #aaa; }
.faint { color: #c4c4c4; }
.faint + .faint { margin-left: -3px; }
.people { width: 86px; height: 18px; margin-left: -4px; padding: 0 2px; border: 1px solid #bbb; border-radius: 2px; background: #fff; font-size: 9px; }
.people::placeholder { color: #777; }
.qat { width: 40px; font-size: 14px; line-height: 14px; margin: 0 -2px 0 -1px; color: #bbb; }
.ol-search { width: 320px; height: 25px; display: flex; align-items: center; gap: 8px; padding-left: 13px; border: 1px solid #e4e4e4; border-radius: 3px; font-size: 9px; color: #bbb; }
.ol-search input::placeholder { color: #c0c0c0; }
.ol-win { margin-left: auto; display: flex; color: #bbb; }
.ol-win button { width: 36px; }
.ol-body { flex: 1; min-height: 0; display: flex; }
.rail { width: 42px; flex: none; color: #555; }
.rail button { width: 36px; height: 34px; border: 0 solid #2b66b5; }
.rail .on { height: 24px; margin: 5px 0 6px 5px; width: 28px; padding-right: 3px; border-left-width: 2px; color: #3a8fd0; }
.rail .office { margin-top: 2px; }
.work { flex: 1; min-width: 0; display: flex; flex-direction: column; }
.tabs { flex: 0 0 23px; display: flex; align-items: flex-start; gap: 14px; padding: 4px 0 0 1px; font-size: 9px; }
.tabs button { height: 16px; border-bottom: 2px solid transparent; }
.tabs .on { border-color: #2360ae; font-weight: 600; }
.ribbon { flex: 0 0 36px; display: flex; align-items: center; margin: 0 7px 0 1px; padding-left: 11px; background: #fff; border-radius: 4px; box-shadow: 0 1px 3px #bbb; font-size: 9px; }
.ribbon .sep { width: 1px; height: 24px; background: #e5e5e5; margin: 0 8px; }
.ribbon .new { gap: 5px; }
.ribbon .new .i8 { margin-left: 3px; }
.ribbon .wide { margin-left: 9px; }
.ribbon .green { color: #2f9e4d; margin: 0 13px 0 9px; }
.ribbon .tight + .sep { margin-left: 11px; }
.ribbon .purple { color: #ad5fc4; margin-right: 12px; }
.ribbon .blue { color: #3794d6; margin-right: 13px; }
.ribbon .move { width: 94px; height: 26px; justify-content: flex-start; gap: 4px; padding-left: 3px; border: 1px solid #ddd; border-radius: 3px; }
.ribbon .move span { flex: 1; text-align: left; font-size: 8px; }
.ribbon .move .i8 { margin-right: 1px; }
.ribbon .move + .sep { margin: 0 5px; }
.ribbon .tight { gap: 2px; }
.ribbon .read { gap: 5px; margin: 0 16px 0 3px; }
.ribbon .flag { margin-left: 14px; }
.ribbon .more { margin: 14px 5px 0 auto; }
.panes { flex: 1; min-height: 0; display: flex; margin: 5px 7px 0 1px; background: #fff; }
.folders { width: 175px; flex: none; overflow: hidden; background: #f8f8f8; border-left: 1px solid #ddd; position: relative; }
.collapse { position: absolute; top: 6px; right: 6px; }
.folders h2 { height: 18px; display: flex; align-items: center; font-size: 10px; margin: 15px 0 1px 3px; }
.folders h2.first { margin: 6px 4px 0 0; padding: 8px 0 0 3px; height: 26px; border-top: 1px solid #ddd; }
.folders h2.second { margin-top: 15px; margin-bottom: 0; height: 16px; }
.folders li { height: 18px; display: flex; align-items: center; margin: 0 16px 0 2px; padding: 0 7px 0 11px; color: #555; white-space: nowrap; }
.folders li.sub { padding-left: 3px; }
.folders li.sel { background: #e2e2e2; color: #111; font-weight: 700; }
.folders li.last { height: 15px; }
.folders li b { margin-left: auto; color: #2464ac; }
.folders li .thin { font-weight: 400; }
.list { width: 322px; flex: none; display: flex; flex-direction: column; border-right: 1px solid #ddd; }
.list-head { flex: 0 0 34px; display: flex; align-items: flex-end; gap: 13px; padding: 0 24px 0 20px; font-size: 10px; }
.list-head button { height: 22px; }
.list-head .on { color: #2b86b5; border-bottom: 1px solid #7fc4dc; }
.list-head .sort { margin-left: auto; margin-right: -4px; gap: 2px; font-size: 8px; }
.list-main { flex: 1; min-height: 0; display: flex; justify-content: space-between; }
.msgs { width: 299px; overflow: hidden; }
.msgs article { height: 58px; padding: 4px 18px 0 20px; border-bottom: 1px solid #e8e8e8; }
.msgs h3 { font-size: 10px; line-height: 15px; color: #333; display: flex; justify-content: space-between; }
.msgs .subj { display: flex; justify-content: space-between; font-size: 7px; line-height: 11px; color: #222; white-space: nowrap; }
.msgs time { font-size: 8px; }
.msgs p { font-size: 7px; line-height: 11px; color: #777; white-space: nowrap; }
.marks { display: flex; align-items: center; gap: 5px; margin-right: 2px; }
.marks b { color: #d13438; font-size: 12px; }
.scroll { width: 14px; margin: 2px 3px 0 0; background: #f8f8f8; display: flex; flex-direction: column; align-items: center; justify-content: space-between; color: #777; font-size: 8px; line-height: 10px; }
.scroll i { width: 6px; height: 13px; border-radius: 3px; background: #777; margin-top: 46px; }
.reading { flex: 1; background: #fff; }
.ol-status { flex: 0 0 16px; display: flex; align-items: center; padding: 0 8px 0 6px; background: #f7f7f6; border-bottom: 1px solid #e5e5e5; color: #444; font-size: 7px; }
.sendrec { margin-left: auto; margin-right: 14px; display: flex; align-items: center; gap: 3px; }
.sendrec i { width: 67px; height: 9px; background: #666; }
.ol-status button { width: 30px; height: 15px; }
.ol-status button.on { background: #e3e3e3; }
.zoom { display: flex; align-items: center; gap: 4px; margin-left: 7px; color: #aaa; font-size: 8px; }
.zoom i { width: 76px; height: 7px; background: linear-gradient(#777, #777) center / 100% 1px no-repeat, linear-gradient(#555, #555) center / 1px 100% no-repeat; }
.zoom em { font-style: normal; margin-left: 5px; font-size: 7px; }

/* Windows 11 taskbar of the remote machine */
.tb11 { flex: 0 0 35px; display: flex; align-items: center; background: linear-gradient(90deg, #d8f3e7 0, #d8f3e7 6%, #f1f2f2 20%, #f0f1f2 45%, #e4f3fa 65%, #eaf0fb 80%, #d5efec 92%, #cdf1ea); }
.weather { width: 256px; display: flex; align-items: center; gap: 4px; padding-left: 14px; line-height: 12px; }
.weather svg { width: 20px; height: 16px; }
.weather span { color: #666; }
.apps11 { display: flex; align-items: center; }
.apps11 button { width: 33px; height: 31px; position: relative; }
.search11 { width: 158px; height: 24px; margin: 0 5px; display: flex; align-items: center; gap: 7px; padding: 0 4px 0 6px; border-radius: 12px; background: #fff; border-bottom: 1px solid #d8d8d8; font-size: 9px; color: #222; }
.search11 input { flex: 1; }
.search11 .i12 { stroke-width: 2; }
.bk { width: 30px; height: 18px; }
.apps11 .on { background: #fbfdfe; border-radius: 4px; }
.apps11 .on::after, .apps11 .run::after { content: ""; position: absolute; bottom: 0; left: 15px; width: 4px; height: 2px; border-radius: 1px; background: #7c8791; }
.apps11 .on::after { left: 11px; width: 12px; background: #2b7a85; }
.badge { position: absolute; top: 3px; right: 0; width: 12px; height: 12px; line-height: 12px; border-radius: 6px; background: #4a4a4a; color: #ddd; font-size: 7px; }
.tray11 { margin-left: auto; display: flex; align-items: center; gap: 6px; padding-right: 15px; }
.tray11 .i12 + .i14 { margin: 0 5px; }
.tray11 time { margin-left: 8px; text-align: right; line-height: 12px; }

/* Send/receive dialog */
.dialog { position: absolute; top: 50px; right: 47px; width: 452px; background: #f2f2f2; border: 1px solid #bbb; border-radius: 6px; box-shadow: 0 8px 22px #0006; font-size: 7px; color: #222; }
.d-title { height: 19px; display: flex; align-items: center; gap: 3px; padding: 0 1px 0 4px; background: linear-gradient(90deg, #f5f0f3, #edf3f5); border-radius: 6px 6px 0 0; font-size: 9px; line-height: 12px; }
.d-title span { flex: 1; }
.d-title button { width: 32px; }
.d-title .off { color: #ccc; }
.d-top { display: flex; justify-content: space-between; margin: 0 5px; height: 70px; border-bottom: 1px solid #aaa; }
.d-prog { width: 342px; padding: 7px 0 0 2px; }
.d-prog p { line-height: 14px; padding-left: 1px; }
.progress { height: 11px; margin: 12px 0 7px; padding: 1px; background: #e6f5e4; }
.progress i { display: block; height: 100%; width: 99%; background: linear-gradient(90deg, #13880f 24%, #6cd967 30%, #6cd967 32%, #13880f 38%); }
.d-prog label { display: flex; align-items: center; gap: 2px; white-space: nowrap; }
.d-prog input { appearance: none; width: 10px; height: 10px; border: 1px solid #777; border-radius: 2px; background: #fafafa; }
.d-btns { width: 70px; display: flex; flex-direction: column; gap: 8px; padding-top: 8px; }
.d-btns button { height: 18px; background: #fff; border: 1px solid #e2e2e2; border-radius: 2px; }
.d-btns .def { border-color: #2d96b8; }
.d-tabs { display: flex; height: 24px; align-items: flex-end; padding-left: 4px; }
.d-tabs button { width: 30px; height: 13px; }
.d-tabs .on { width: 35px; height: 15px; background: #fafafa; margin-left: 3px; }
.d-panel { margin: 0 5px 0 4px; padding: 6px 4px 29px 2px; background: #f9f9f9; }
.errors { height: 120px; display: flex; border: 1px solid #999; background: #fff; }
.errors ul { flex: 1; padding: 2px 34px 0 12px; }
.errors li { line-height: 11px; margin-bottom: 2px; position: relative; color: #444; }
.errors li::before { content: "!"; position: absolute; left: -7px; top: -2px; font-weight: 800; font-size: 11px; color: #7c1520; }
.d-scroll { width: 12px; background: #f4f4f4; display: flex; flex-direction: column; align-items: center; justify-content: space-between; color: #999; line-height: 12px; }
.d-foot { height: 33px; display: flex; justify-content: flex-end; padding: 10px 10px 0 0; }
.cursor { position: absolute; left: 187px; top: 132px; width: 10px; height: 15px; }

/* Windows 10 taskbar */
.tb10 { flex: 0 0 38px; display: flex; align-items: stretch; position: relative; background: linear-gradient(90deg, #0d2635, #16334c 25%, #14304a 55%, #0a2744 80%, #0b2542); border-top: 1px solid #05090d; color: #e8edf0; }
.tb10 button { width: 46px; position: relative; }
.grip { width: 4px; margin: 11px 11px 11px 5px; border: 1px solid #3d5668; border-width: 0 1px; }
.tb10 .run::after { content: ""; position: absolute; left: 4px; right: 4px; bottom: 0; height: 2px; background: #86b9e8; }
.tb10 .active { background: #1d588e; }
.tb10 .active::after { left: 0; right: 0; }
.dot { position: absolute; right: 8px; bottom: 5px; width: 13px; height: 13px; border-radius: 7px; background: #000; }
.dot.white { background: linear-gradient(#555, #555) center / 7px 2px no-repeat, #e5eadd; }
.tray10 { margin-left: auto; display: flex; align-items: center; gap: 7px; }
.tray10 .k { width: 24px; height: 18px; }
.tray10 time { font-size: 10px; line-height: 17px; text-align: center; margin-left: 2px; }
.tray10 .nt { margin: 0 13px 0 10px; }
.peek { width: 1px; align-self: stretch; background: #456; margin-right: 2px; }
```
